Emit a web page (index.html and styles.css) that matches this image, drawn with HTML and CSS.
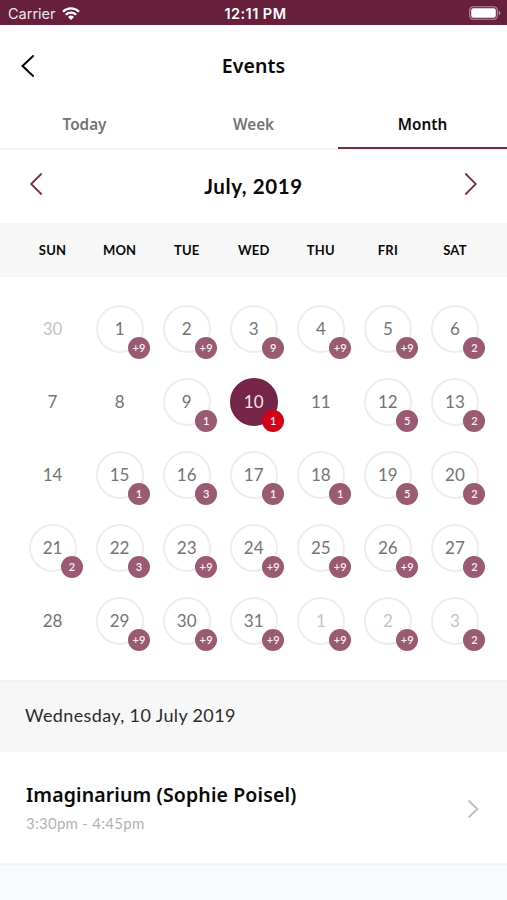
FILE: index.html
```html
<!DOCTYPE html>
<html lang="en">
<head>
<meta charset="utf-8">
<title>Events</title>
<link rel="stylesheet" href="styles.css">
</head>
<body>
<div class="status">
  <div class="carrier"><span>Carrier</span>
    <svg width="18" height="13" viewBox="0 0 18 13"><g fill="none" stroke="#fff" stroke-width="2.3"><path d="M1 4.7a11.4 11.4 0 0 1 16 0"/><path d="M3.8 7.8a7.4 7.4 0 0 1 10.4 0"/></g><path d="M6 9.9a4.3 4.3 0 0 1 6 0L9 12.9z" fill="#fff"/></svg>
  </div>
  <span class="clock">12:11 PM</span>
  <svg class="battery" width="32" height="14" viewBox="0 0 32 14"><rect x=".7" y=".7" width="27.6" height="12.6" rx="3.6" fill="none" stroke="#b591a2" stroke-width="1.1"/><rect x="2.2" y="2.2" width="24.6" height="9.6" rx="2" fill="#fff"/><path d="M29.8 4.8q1.7.8 1.7 2.2t-1.7 2.2z" fill="#b591a2"/></svg>
</div>
<header class="header">
  <svg class="back" width="14" height="24" viewBox="0 0 14 24"><path d="M13.7 1.5 2.5 12l11.2 10.5"/></svg>
  <h1><span>Events</span></h1>
</header>
<nav class="tabs"><a><span>Today</span></a><a><span>Week</span></a><a class="active"><span>Month</span></a></nav>
<div class="month">
  <svg class="arrow" width="14" height="24" viewBox="0 0 14 24"><path d="M12.7 1.5 2.2 12l10.5 10.5"/></svg>
  <h2>July, 2019</h2>
  <svg class="arrow" width="14" height="24" viewBox="0 0 14 24"><path d="M1.3 1.5 11.8 12 1.3 22.5"/></svg>
</div>
<div class="weekdays"><span>SUN</span><span>MON</span><span>TUE</span><span>WED</span><span>THU</span><span>FRI</span><span>SAT</span></div>
<main class="days" id="days"></main>
<div class="date"><span>Wednesday, 10 July 2019</span></div>
<section class="event">
  <div><h3>Imaginarium (Sophie Poisel)</h3><p>3:30pm - 4:45pm</p></div>
  <svg class="more" width="12" height="20" viewBox="0 0 12 20"><path d="M1.5 1.5 10.3 10l-8.8 8.5"/></svg>
</section>
<script src="calendar.js"></script>
</body>
</html>
```
FILE: styles.css
```css
* { box-sizing: border-box; }
body { margin: 0; width: 507px; height: 900px; overflow: hidden; display: flex; flex-direction: column; background: #f8fafc; color: #090909; font-family: Lato, "Open Sans", sans-serif; }
h1, h2, h3, p { margin: 0; }
svg { display: block; flex: none; }
.status { height: 25px; flex: none; background: #66203c; color: #fff; display: grid; grid-template-columns: 1fr auto 1fr; align-items: center; padding: 2px 6px 0 8px; font: 400 14.5px/20px Inter, sans-serif; }
.carrier { display: flex; align-items: center; gap: 6px; color: #f0e6eb; }
.clock { font-weight: 600; font-size: 14.5px; letter-spacing: .45px; margin-left: 2px; }
.battery { justify-self: end; margin-top: -1px; }
.header { height: 77px; flex: none; background: #fff; display: grid; grid-template-columns: 1fr auto 1fr; align-items: center; padding: 5px 20px 0; }
.back path { fill: none; stroke: #000; stroke-width: 2; }
h1 { font-family: "Noto Sans", sans-serif; font-size: 19.5px; line-height: 24px; font-weight: 600; margin-top: -1px; letter-spacing: .1px; }
.tabs { height: 48px; flex: none; display: grid; grid-template-columns: repeat(3, 1fr); background: #fff; border-bottom: 2px solid #f3f3f4; }
.tabs a { height: 48px; padding-top: 12px; text-align: center; font-family: "Noto Sans", sans-serif; font-size: 15.3px; line-height: 20px; font-weight: 600; color: #747474; }
.tabs .active { height: 47px; color: #090909; border-bottom: 2px solid #762c49; }
.month { height: 73px; flex: none; background: #fff; display: flex; justify-content: space-between; align-items: center; padding: 0 29px; }
.month h2 { font-size: 20.5px; line-height: 24px; font-weight: 700; margin-top: -1px; letter-spacing: .6px; }
.arrow { margin-top: -5px; }
.arrow path { fill: none; stroke: #7e2c4e; stroke-width: 1.8; }
.weekdays { height: 54px; flex: none; background: #f7f7f7; display: grid; grid-template-columns: repeat(7, 1fr); align-items: center; padding: 0 18.5px 0 19px; text-align: center; font-size: 13px; font-weight: 700; letter-spacing: .2px; }
.days { height: 403px; flex: none; background: #fff; padding: 28px 18.5px 0 19px; display: grid; grid-template-columns: repeat(7, 1fr); grid-auto-rows: 73.1px; justify-items: center; }
.day { position: relative; width: 48px; height: 48px; border: 2px solid transparent; border-radius: 50%; display: flex; align-items: center; justify-content: center; font-size: 17px; line-height: 20px; color: #747474; }
.busy { border-color: #f0ebed; }
.outside { color: #c4c4c4; }
.selected { background: #762548; border-color: #762548; color: #f2e5eb; }
.badge { position: absolute; right: -8.5px; bottom: -8px; width: 22px; height: 22px; border-radius: 50%; background: #995a72; color: #f8f0f4; display: flex; align-items: center; justify-content: center; font-size: 11px; font-weight: 600; line-height: 22px; letter-spacing: .2px; }
.selected .badge { background: #d20018; }
.date { height: 72px; flex: none; background: #f7f7f7; border-top: 2px solid #f2f2f3; padding: 0 25px 4px; display: flex; align-items: center; font-size: 18px; letter-spacing: .36px; color: #2c2c2c; }
.event { height: 113px; flex: none; background: #fff; border-bottom: 2px solid #f2f4f5; padding: 2px 28px 0 26px; display: flex; justify-content: space-between; align-items: center; }
h3 { font-family: "Noto Sans", sans-serif; font-size: 19.5px; line-height: 26px; font-weight: 600; margin-top: -3px; letter-spacing: .12px; }
.event p { margin-top: 5px; font-size: 15px; line-height: 20px; color: #b2b3b5; letter-spacing: .27px; }
.more path { fill: none; stroke: #bec0c1; stroke-width: 2; }
```
FILE: calendar.js
```js
const days = [
  ["30"], ["1", "+9"], ["2", "+9"], ["3", "9"], ["4", "+9"], ["5", "+9"], ["6", "2"],
  ["7"], ["8"], ["9", "1"], ["10", "1"], ["11"], ["12", "5"], ["13", "2"],
  ["14"], ["15", "1"], ["16", "3"], ["17", "1"], ["18", "1"], ["19", "5"], ["20", "2"],
  ["21", "2"], ["22", "3"], ["23", "+9"], ["24", "+9"], ["25", "+9"], ["26", "+9"], ["27", "2"],
  ["28"], ["29", "+9"], ["30", "+9"], ["31", "+9"], ["1", "+9"], ["2", "+9"], ["3", "2"]
];
const root = document.getElementById("days");
days.forEach(([label, count], i) => {
  const el = document.createElement("div");
  el.className = "day";
  if (count) el.classList.add("busy");
  if (i === 0 || i > 31) el.classList.add("outside");
  if (label === "10") el.classList.add("selected");
  const text = document.createElement("span");
  text.textContent = label;
  el.append(text);
  if (count) {
    const badge = document.createElement("span");
    badge.className = "badge";
    badge.textContent = count;
    el.append(badge);
  }
  root.append(el);
});
```
